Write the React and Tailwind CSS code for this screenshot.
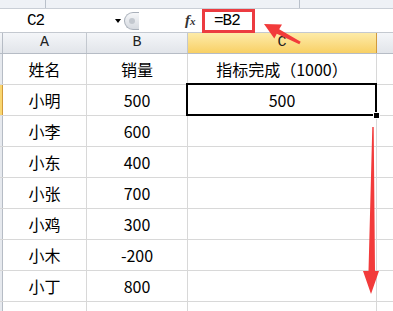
import React from 'react'

const rows = [
  ['姓名', '销量', '指标完成（1000）'],
  ['小明', '500', '500'],
  ['小李', '600', ''],
  ['小东', '400', ''],
  ['小张', '700', ''],
  ['小鸡', '300', ''],
  ['小木', '-200', ''],
  ['小丁', '800', ''],
  ['', '', ''],
]

function App() {
  return (
    <div className="relative w-[393px] h-[311px] overflow-hidden bg-white text-black [font-family:'Noto_Sans_CJK_SC',sans-serif]">
      {/* ribbon edge */}
      <div className="flex h-[9px] bg-[#eef1f6] border-b border-[#c9ced6]">
        <div className="w-[46px] border-r border-[#b9c0ca]" />
        <div className="w-[254px] border-r border-[#b9c0ca]" />
        <div className="flex-1" />
      </div>

      {/* formula bar */}
      <div className="flex h-[24px] items-center bg-white border-b border-[#c4c9d0]">
        <div className="w-[112px] h-full flex items-center pl-[27px] text-[16px] [font-family:'Liberation_Mono',monospace] tracking-[-1px]">
          C2
        </div>
        <div className="w-[12px] flex items-center justify-center">
          <div className="w-0 h-0 border-l-[3.5px] border-r-[3.5px] border-t-[4px] border-l-transparent border-r-transparent border-t-black" />
        </div>
        <div className="w-[15px] h-[18px] rounded-l-full border border-r-0 border-[#a9b0ba] bg-gradient-to-b from-[#f6f7f9] to-[#d6dae0] flex items-center justify-center">
          <div className="w-[6px] h-[6px] rounded-full bg-[#c3c8cf]" />
        </div>
        <div className="w-[46px]" />
        <div className="w-[15px] text-[15px] italic font-bold [font-family:'Liberation_Serif',serif] text-[#333] leading-none">
          f<span className="text-[11px]">x</span>
        </div>
        <div className="w-[2px]" />
        <div className="h-[24px] w-[53px] border-[3px] border-[#ec3b40] flex items-center pl-[9px] text-[16px] [font-family:'Liberation_Mono',monospace] tracking-[-1px]">
          =B2
        </div>
      </div>

      {/* column headers */}
      <div className="flex h-[21px] border-b border-[#b6bcc5] bg-gradient-to-b from-[#f4f6f9] to-[#e2e5ea] text-[15px] [font-family:'Liberation_Mono',monospace] text-[#222]">
        <div className="w-[3px] border-r border-[#b6bcc5]" />
        <div className="w-[84px] border-r border-[#c3c8cf] flex items-center justify-center">A</div>
        <div className="w-[101px] border-r border-[#c3c8cf] flex items-center justify-center">B</div>
        <div className="w-[189px] border-r border-[#d19a3c] bg-gradient-to-b from-[#fdeba8] to-[#f8d064] flex items-center justify-center">C</div>
        <div className="flex-1" />
      </div>

      {/* cells */}
      {rows.map((r, i) => (
        <div key={i} className="flex h-[31px] border-b border-[#d8d8d8] text-[16px]">
          <div
            className={
              i === 1
                ? 'w-[3px] border-r border-[#d19a3c] bg-[#f9d670]'
                : 'w-[3px] border-r border-[#b6bcc5] bg-[#e6e9ee]'
            }
          />
          <div className="w-[84px] border-r border-[#d8d8d8] flex items-center justify-center">{r[0]}</div>
          <div className="w-[101px] border-r border-[#d8d8d8] flex items-center justify-center">{r[1]}</div>
          <div className="w-[189px] border-r border-[#d8d8d8] flex items-center justify-center">{r[2]}</div>
          <div className="flex-1" />
        </div>
      ))}

      {/* active cell */}
      <div className="absolute left-[186px] top-[83px] w-[191px] h-[33px] border-2 border-black" />
      <div className="absolute left-[373px] top-[112px] w-[7px] h-[7px] bg-black border border-white" />

      {/* annotation arrows */}
      <svg className="absolute inset-0 pointer-events-none" width="393" height="311" viewBox="0 0 393 311">
        <polygon
          fill="#f23b3b"
          points="264,24 282,24.4 279.2,29.3 300.7,41.7 299.3,44.3 276.8,33.7 274.3,38.6"
        />
        <polygon
          fill="#f23b3b"
          points="372.3,127 373.7,127 375,271 379,271 371,294 363,271 368.5,271"
        />
      </svg>
    </div>
  )
}

export default App
